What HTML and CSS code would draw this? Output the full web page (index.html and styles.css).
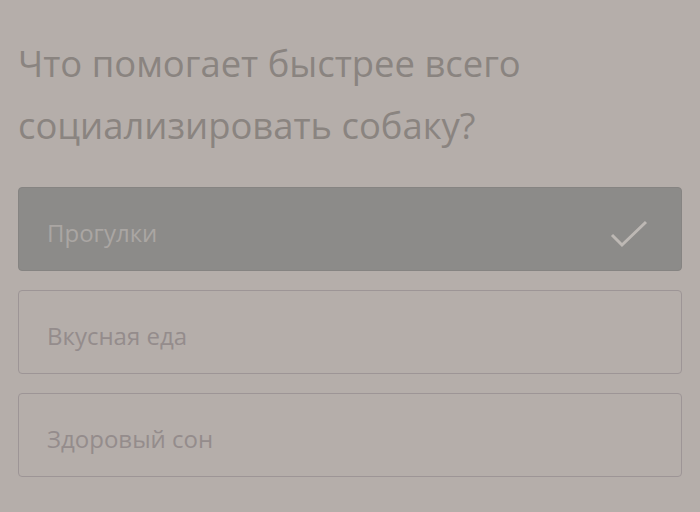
FILE: index.html
```html
<!DOCTYPE html>
<html lang="ru">
<head>
    <meta charset="UTF-8">
    <title>Вопрос</title>
    <meta name="viewport" content="width=device-width, initial-scale=1">
    <link rel="stylesheet" href="styles.css">
</head>
<body>
    <h1 class="question">Что помогает быстрее всего социализировать собаку?</h1>
    <div class="answers">
        <div class="answer selected">
            <span class="answer-text">Прогулки</span>
            <svg class="check" width="38" height="30" viewBox="0 0 38 30">
                <path d="M2 15 L12 25 L36 2" fill="none" stroke="#bdb8b4" stroke-width="3"/>
            </svg>
        </div>
        <div class="answer">
            <span class="answer-text">Вкусная еда</span>
        </div>
        <div class="answer">
            <span class="answer-text">Здоровый сон</span>
        </div>
    </div>
</body>
</html>
```

FILE: styles.css
```css
body {
    font-family: "Open Sans", Arial, sans-serif;
    background: #b5aeaa;
    margin: 0;
    padding: 32px 18px 0 18px;
}
.question {
    font-size: 36.4px;
    font-weight: normal;
    line-height: 62px;
    color: #8a8480;
    margin: 0 0 31px 0;
    max-width: 530px;
}
.answers {
    display: flex;
    flex-direction: column;
    gap: 19px;
}
.answer {
    display: flex;
    align-items: center;
    justify-content: space-between;
    box-sizing: border-box;
    height: 84px;
    padding: 6px 33px 0 28px;
    border: 1px solid #9d9596;
    border-radius: 4px;
}
.answer-text {
    font-size: 24px;
    color: #948c8c;
}
.selected {
    background: #8c8b89;
    border-color: #868482;
}
.selected .answer-text {
    color: #aaa6a3;
}
.check {
    margin-top: 6px;
}
```
